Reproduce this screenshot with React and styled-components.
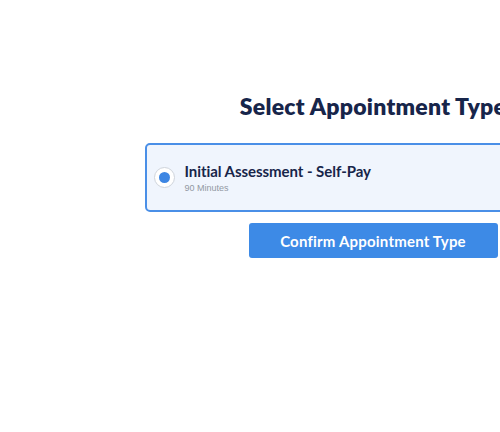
import React, { useState } from "react";
import styled, { createGlobalStyle } from "styled-components";

const GlobalStyle = createGlobalStyle`
  html, body {
    margin: 0;
    padding: 0;
    background: #ffffff;
  }
  body {
    font-family: Lato, "Open Sans", sans-serif;
    overflow: hidden;
  }
`;

const types = [{ id: "initial", name: "Initial Assessment - Self-Pay", duration: "90 Minutes" }];

export default function App() {
  const [selected, setSelected] = useState("initial");
  return (
    <>
      <GlobalStyle />
      <Page>
        <Title>Select Appointment Type</Title>
        <List>
          {types.map((t) => (
            <Option key={t.id} $active={selected === t.id} onClick={() => setSelected(t.id)}>
              <Radio $active={selected === t.id} />
              <Info>
                <Name>{t.name}</Name>
                <Duration>{t.duration}</Duration>
              </Info>
            </Option>
          ))}
        </List>
        <Confirm>Confirm Appointment Type</Confirm>
      </Page>
    </>
  );
}

const Page = styled.div`
  width: 746px;
  display: flex;
  flex-direction: column;
  align-items: center;
  padding-top: 91px;
`;

const Title = styled.h1`
  margin: 0;
  font-size: 23px;
  line-height: 30px;
  font-weight: 800;
  color: #17254a;
  letter-spacing: 0.25px;
  white-space: nowrap;
`;

const List = styled.div`
  margin-top: 22px;
  display: flex;
  flex-direction: column;
  gap: 10px;
`;

const Option = styled.div`
  box-sizing: border-box;
  width: 457px;
  height: 69px;
  display: flex;
  align-items: center;
  gap: 10px;
  padding: 0 7px;
  border: 2px solid ${({ $active }) => ($active ? "#4a8fe7" : "#d6dbe4")};
  border-radius: 5px;
  background: ${({ $active }) => ($active ? "#f0f5fd" : "#ffffff")};
  cursor: pointer;
`;

const Radio = styled.span`
  box-sizing: border-box;
  width: 21px;
  height: 21px;
  border-radius: 50%;
  border: 1px solid #cfd4db;
  background: #ffffff;
  display: flex;
  align-items: center;
  justify-content: center;
  flex-shrink: 0;
  &::after {
    content: "";
    width: 11px;
    height: 11px;
    border-radius: 50%;
    background: ${({ $active }) => ($active ? "#3d86e3" : "transparent")};
  }
`;

const Info = styled.div`
  display: flex;
  flex-direction: column;
  gap: 2px;
`;

const Name = styled.div`
  font-size: 15px;
  line-height: 18px;
  font-weight: 700;
  color: #17254a;
  letter-spacing: -0.05px;
`;

const Duration = styled.div`
  font-family: "Liberation Sans", Arial, sans-serif;
  font-size: 9px;
  line-height: 12px;
  color: #9299a3;
`;

const Confirm = styled.button`
  margin-top: 11px;
  width: 249px;
  height: 35px;
  border: none;
  border-radius: 3px;
  background: #3d8ae6;
  color: #ffffff;
  font-family: Lato, "Open Sans", sans-serif;
  font-size: 15px;
  font-weight: 700;
  letter-spacing: 0.2px;
  cursor: pointer;
`;
